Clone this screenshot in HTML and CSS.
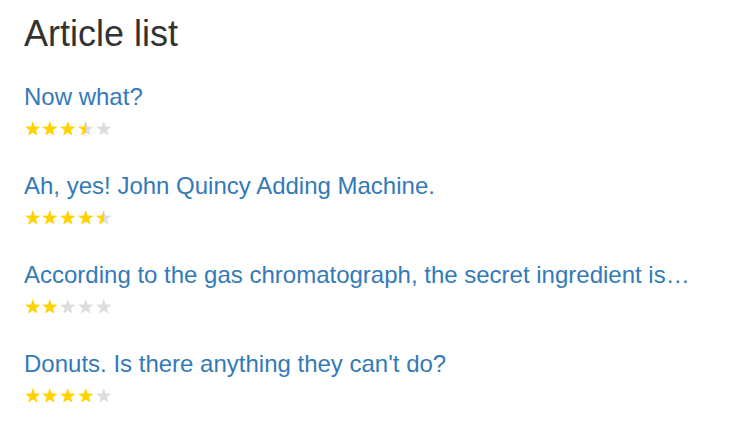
FILE: index.html
```html
<!DOCTYPE html>
<html lang="en">
<head>
<meta charset="utf-8">
<title>Article list</title>
<link rel="stylesheet" href="styles.css">
</head>
<body>
<svg class="defs" width="0" height="0" aria-hidden="true">
  <defs>
    <linearGradient id="half" x1="0" y1="0" x2="1" y2="0">
      <stop offset="0.5" stop-color="#ffd200"/>
      <stop offset="0.5" stop-color="#dddddd"/>
    </linearGradient>
    <path id="star" d="M0 -10 L2.351 -3.236 L9.511 -3.090 L3.804 1.236 L5.878 8.090 L0 4 L-5.878 8.090 L-3.804 1.236 L-9.511 -3.090 L-2.351 -3.236 Z"/>
  </defs>
</svg>
<div class="container">
  <h1 class="title">Article list</h1>
  <ul class="articles">
    <li class="article">
      <a class="article-link" href="#">Now what?</a>
      <div class="stars">
        <svg class="star on" viewBox="-9.511 -10 19.022 18.09"><use href="#star"/></svg>
        <svg class="star on" viewBox="-9.511 -10 19.022 18.09"><use href="#star"/></svg>
        <svg class="star on" viewBox="-9.511 -10 19.022 18.09"><use href="#star"/></svg>
        <svg class="star half" viewBox="-9.511 -10 19.022 18.09"><use href="#star"/></svg>
        <svg class="star off" viewBox="-9.511 -10 19.022 18.09"><use href="#star"/></svg>
      </div>
    </li>
    <li class="article">
      <a class="article-link" href="#">Ah, yes! John Quincy Adding Machine.</a>
      <div class="stars">
        <svg class="star on" viewBox="-9.511 -10 19.022 18.09"><use href="#star"/></svg>
        <svg class="star on" viewBox="-9.511 -10 19.022 18.09"><use href="#star"/></svg>
        <svg class="star on" viewBox="-9.511 -10 19.022 18.09"><use href="#star"/></svg>
        <svg class="star on" viewBox="-9.511 -10 19.022 18.09"><use href="#star"/></svg>
        <svg class="star half" viewBox="-9.511 -10 19.022 18.09"><use href="#star"/></svg>
      </div>
    </li>
    <li class="article">
      <a class="article-link" href="#">According to the gas chromatograph, the secret ingredient is…</a>
      <div class="stars">
        <svg class="star on" viewBox="-9.511 -10 19.022 18.09"><use href="#star"/></svg>
        <svg class="star on" viewBox="-9.511 -10 19.022 18.09"><use href="#star"/></svg>
        <svg class="star off" viewBox="-9.511 -10 19.022 18.09"><use href="#star"/></svg>
        <svg class="star off" viewBox="-9.511 -10 19.022 18.09"><use href="#star"/></svg>
        <svg class="star off" viewBox="-9.511 -10 19.022 18.09"><use href="#star"/></svg>
      </div>
    </li>
    <li class="article">
      <a class="article-link" href="#">Donuts. Is there anything they can't do?</a>
      <div class="stars">
        <svg class="star on" viewBox="-9.511 -10 19.022 18.09"><use href="#star"/></svg>
        <svg class="star on" viewBox="-9.511 -10 19.022 18.09"><use href="#star"/></svg>
        <svg class="star on" viewBox="-9.511 -10 19.022 18.09"><use href="#star"/></svg>
        <svg class="star on" viewBox="-9.511 -10 19.022 18.09"><use href="#star"/></svg>
        <svg class="star off" viewBox="-9.511 -10 19.022 18.09"><use href="#star"/></svg>
      </div>
    </li>
  </ul>
</div>
</body>
</html>
```
FILE: styles.css
```css
html, body {
  margin: 0;
  padding: 0;
  background: #ffffff;
}
body {
  font-family: "Liberation Sans", Arial, sans-serif;
  color: #333333;
}
.defs {
  position: absolute;
  width: 0;
  height: 0;
  overflow: hidden;
}
.container {
  padding: 14px 24px 0 24px;
}
.title {
  margin: 0;
  font-size: 36px;
  font-weight: 400;
  line-height: 39.6px;
  color: #333333;
}
.articles {
  list-style: none;
  margin: 30px 0 0 0;
  padding: 0;
  display: flex;
  flex-direction: column;
  gap: 37px;
}
.article {
  display: flex;
  flex-direction: column;
  align-items: flex-start;
}
.article-link {
  font-size: 24px;
  line-height: 26px;
  color: #337ab7;
  text-decoration: none;
}
.stars {
  display: flex;
  gap: 2.3px;
  margin-top: 11px;
  margin-left: 0.5px;
  height: 15px;
}
.star {
  width: 15.6px;
  height: 14.8px;
  display: block;
}
.star.on { fill: #ffd200; }
.star.off { fill: #dddddd; }
.star.half { fill: url(#half); }
```
